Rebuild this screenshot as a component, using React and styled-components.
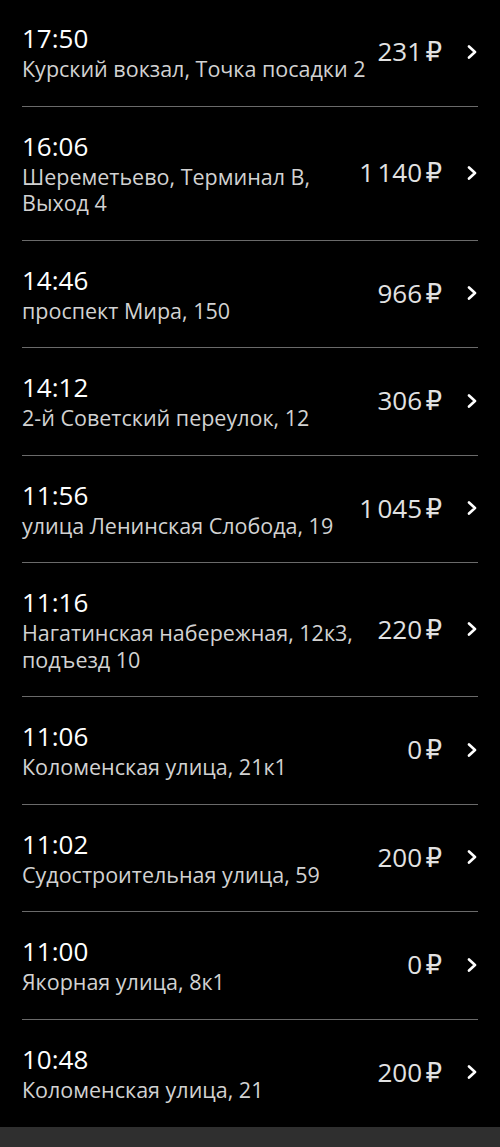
import React from 'react';
import styled, { createGlobalStyle } from 'styled-components';

const rides = [
  { time: '17:50', address: 'Курский вокзал, Точка посадки 2', price: '231' },
  { time: '16:06', address: 'Шереметьево, Терминал B, Выход 4', price: '1\u202F140' },
  { time: '14:46', address: 'проспект Мира, 150', price: '966' },
  { time: '14:12', address: '2-й Советский переулок, 12', price: '306' },
  { time: '11:56', address: 'улица Ленинская Слобода, 19', price: '1\u202F045' },
  { time: '11:16', address: 'Нагатинская набережная, 12к3, подъезд 10', price: '220' },
  { time: '11:06', address: 'Коломенская улица, 21к1', price: '0' },
  { time: '11:02', address: 'Судостроительная улица, 59', price: '200' },
  { time: '11:00', address: 'Якорная улица, 8к1', price: '0' },
  { time: '10:48', address: 'Коломенская улица, 21', price: '200' },
];

const Chevron = () => (
  <ChevronIcon width="12" height="14" viewBox="0 0 12 14">
    <polyline points="3,1.5 9,7 3,12.5" fill="none" stroke="#fff" strokeWidth="2.6" strokeLinecap="round" strokeLinejoin="round" />
  </ChevronIcon>
);

const App = () => {
  return (
    <>
      <GlobalStyle />
      <Screen>
        <RideList>
          {rides.map((ride, i) => (
            <RideRow key={ride.time + i} $last={i === rides.length - 1}>
              <RideInfo>
                <Time>{ride.time}</Time>
                <Address>{ride.address}</Address>
              </RideInfo>
              <Price>{ride.price}{'\u202F'}₽</Price>
              <Chevron />
            </RideRow>
          ))}
        </RideList>
        <BottomBar />
      </Screen>
    </>
  );
};

export default App;

// ***********************************************************************************
// Styled Components
// ***********************************************************************************

const GlobalStyle = createGlobalStyle`
  html, body {
    margin: 0;
    padding: 0;
    background: #000;
  }
  body {
    font-family: "Open Sans", "DejaVu Sans", sans-serif;
    -webkit-font-smoothing: antialiased;
  }
`;

const Screen = styled.div`
  display: flex;
  flex-direction: column;
  min-height: 1147px;
  background: #000;
`;

const RideList = styled.div`
  flex: 1;
  display: flex;
  flex-direction: column;
  padding: 0 22px;
  margin-top: -1px;
`;

const RideRow = styled.div`
  display: flex;
  align-items: center;
  padding: 22px 0 ${({ $last }) => ($last ? '24px' : '23px')};
  border-bottom: ${({ $last }) => ($last ? 'none' : '1px solid #6a6a6a')};
`;

const RideInfo = styled.div`
  flex: 1;
  min-width: 0;
  padding-right: 8px;
`;

const Time = styled.div`
  color: #fff;
  font-size: 26px;
  line-height: 35px;
`;

const Address = styled.div`
  color: #d2d2d2;
  font-size: 21.5px;
  line-height: 26.5px;
`;

const Price = styled.div`
  flex-shrink: 0;
  color: #e2e2e2;
  font-size: 26px;
  line-height: 35px;
  margin-right: 24px;
  white-space: nowrap;
`;

const ChevronIcon = styled.svg`
  flex-shrink: 0;
  display: block;
`;

const BottomBar = styled.div`
  height: 20px;
  background: #2f2f2f;
`;
